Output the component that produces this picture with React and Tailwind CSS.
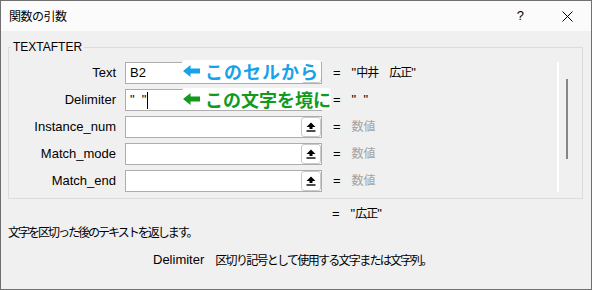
import React from "react";

const UpBtn = () => (
  <div className="w-[20px] h-[20px] shrink-0 rounded-[3px] border border-[#c9c9c9] bg-white flex items-center justify-center">
    <svg width="10" height="10" viewBox="0 0 10 10">
      <path d="M5 0.5 L9.5 5 L6.5 5 L6.5 7 L3.5 7 L3.5 5 L0.5 5 Z" fill="#000" />
      <rect x="0.5" y="8.3" width="9" height="1.4" fill="#000" />
    </svg>
  </div>
);

const Arrow = ({ color }) => (
  <svg width="17" height="12" viewBox="0 0 17 12" className="shrink-0">
    <path d="M0 6 L7.5 0 L7.5 3.5 L17 3.5 L17 8.5 L7.5 8.5 L7.5 12 Z" fill={color} />
  </svg>
);

const Row = ({ label, children, value, btn = true, overlay }) => (
  <div className="flex items-center h-[22px]">
    <div className="w-[107px] text-right mr-[9px] leading-[18px]">{label}</div>
    <div className="relative w-[197px] h-[22px] border border-[#adadad] bg-white flex items-center justify-between pl-[4px]">
      <div className="flex items-center leading-[18px] whitespace-pre">{children}</div>
      {btn && <UpBtn />}
      {overlay}
    </div>
    <div className="ml-[11px] leading-[18px]">=</div>
    <div className="ml-[11px] leading-[18px] whitespace-pre">{value}</div>
  </div>
);

const Gray = ({ children }) => (
  <span className="text-[12px] text-[#a3a3a3]">{children}</span>
);

export default function App() {
  return (
    <div className="w-[592px] h-[290px] border border-[#707070] bg-[#f0f0f0] flex flex-col text-[13px] text-black font-['Liberation_Sans','Noto_Sans_CJK_JP',sans-serif] overflow-hidden">
      {/* title bar */}
      <div className="h-[30px] shrink-0 bg-[#fbfbfb] flex items-center pl-[8px]">
        <div className="text-[12px] tracking-[-0.5px] font-['Noto_Sans_CJK_JP',sans-serif]">関数の引数</div>
        <div className="flex-1" />
        <div className="text-[13px] mr-[38px]">?</div>
        <svg width="11" height="11" viewBox="0 0 11 11" className="mr-[18px]">
          <path d="M0.5 0.5 L10.5 10.5 M10.5 0.5 L0.5 10.5" stroke="#000" strokeWidth="1" />
        </svg>
      </div>

      {/* body */}
      <div className="pl-[6px] pr-[8px] pt-[7px] flex flex-col">
        <fieldset className="ml-[1px] border border-[#dcdcdc]">
          <legend className="ml-[2px] px-[2px] text-[12px] leading-[18px]">TEXTAFTER</legend>
          <div className="flex pt-[6px] pb-[6px]">
            <div className="flex-1 flex flex-col gap-[5px]">
              <Row
                label="Text"
                value={<span>"<span className="text-[12px] tracking-[-1px]">中井　広正</span>"</span>}
                overlay={
                  <div className="absolute left-[56px] top-[-3px] w-[139px] h-[22px] bg-white rounded-[4px] flex items-center pl-[1px] whitespace-nowrap">
                    <Arrow color="#16a2ea" />
                    <span className="ml-[5px] text-[18px] leading-none font-bold tracking-[1px] text-[#16a2ea] font-['Noto_Sans_CJK_JP',sans-serif]">
                      このセルから
                    </span>
                  </div>
                }
              >
                B2
              </Row>
              <Row
                label="Delimiter"
                value={'"  "'}
                overlay={
                  <div className="absolute left-[56px] top-[-2px] w-[149px] h-[22px] bg-white rounded-[4px] flex items-center pl-[1px] whitespace-nowrap">
                    <Arrow color="#129a1c" />
                    <span className="ml-[5px] text-[18px] leading-none font-bold text-[#129a1c] font-['Noto_Sans_CJK_JP',sans-serif]">
                      この文字を境に
                    </span>
                  </div>
                }
              >
                <span>{'"  "'}</span>
                <span className="ml-[1px] w-[1px] h-[17px] bg-black" />
              </Row>
              <Row label="Instance_num" value={<Gray>数値</Gray>} />
              <Row label="Match_mode" value={<Gray>数値</Gray>} />
              <Row label="Match_end" value={<Gray>数値</Gray>} />
            </div>
            <div className="w-[25px] shrink-0 border-l-2 border-white pt-[17px] pl-[7px]">
              <div className="w-[2px] h-[80px] bg-[#868686]" />
            </div>
          </div>
        </fieldset>

        <div className="mt-[6px] pl-[325px] flex leading-[18px]">
          <span>=</span>
          <span className="ml-[11px]">"<span className="text-[12px] tracking-[-1px]">広正</span>"</span>
        </div>
        <div className="pl-[1px] leading-[18px] text-[12px] tracking-[-2px] font-['Noto_Sans_CJK_JP',sans-serif]">
          文字を区切った後のテキストを返します。
        </div>
        <div className="mt-[10px] pl-[146px] flex items-center leading-[18px]">
          <span>Delimiter</span>
          <span className="ml-[11px] text-[12px] tracking-[-1.7px] font-['Noto_Sans_CJK_JP',sans-serif]">
            区切り記号として使用する文字または文字列。
          </span>
        </div>
      </div>
    </div>
  );
}
